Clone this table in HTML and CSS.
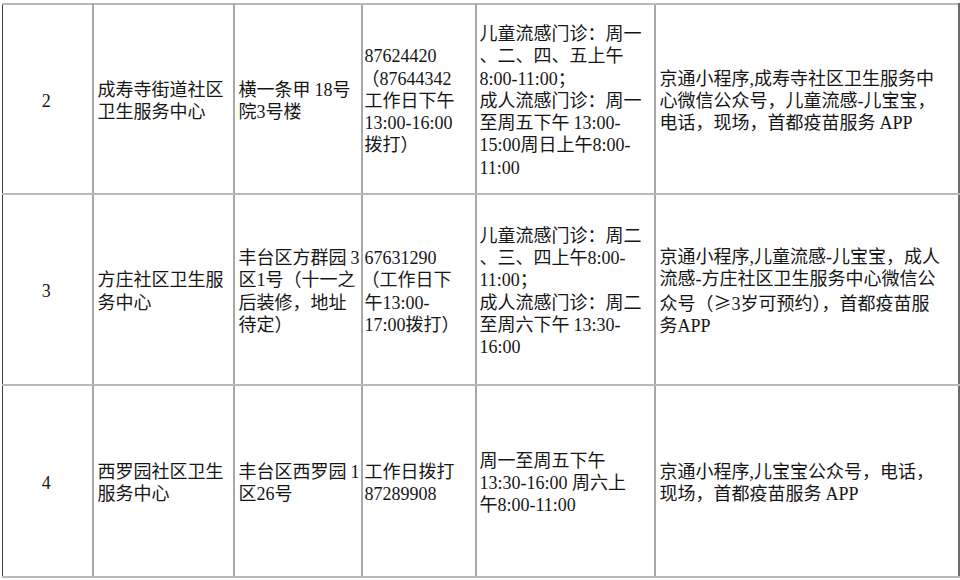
FILE: index.html
```html
<!DOCTYPE html>
<html lang="zh-CN">
<head>
<meta charset="utf-8">
<title>社区卫生服务中心流感疫苗接种信息</title>
<link rel="stylesheet" href="styles.css">
</head>
<body>
<table class="grid">
  <colgroup>
    <col class="w-no">
    <col class="w-name">
    <col class="w-addr">
    <col class="w-tel">
    <col class="w-time">
    <col class="w-way">
  </colgroup>
  <tbody>
    <tr class="row r1">
      <td class="c-no">2</td>
      <td class="c-name">成寿寺街道社区<br>卫生服务中心</td>
      <td class="c-addr">横一条甲<span class="sp"></span>18号<br>院3号楼</td>
      <td class="c-tel">87624420<br><span class="lp">（</span>87644342<br>工作日下午<br>13:00-16:00<br>拨打）</td>
      <td class="c-time">儿童流感门诊：周一<br>、二、四、五上午<br>8:00-11:00；<br>成人流感门诊：周一<br>至周五下午<span class="sp"></span>13:00-<br>15:00周日上午8:00-<br>11:00</td>
      <td class="c-way">京通小程序,成寿寺社区卫生服务中<br>心微信公众号，儿童流感-儿宝宝，<br>电话，现场，首都疫苗服务<span class="sp"></span>APP</td>
    </tr>
    <tr class="row r2">
      <td class="c-no">3</td>
      <td class="c-name">方庄社区卫生服<br>务中心</td>
      <td class="c-addr">丰台区方群园<span class="sp"></span>3<br>区1号（十一之<br>后装修，地址<br>待定）</td>
      <td class="c-tel">67631290<br><span class="lp">（</span>工作日下<br>午13:00-<br>17:00拨打）</td>
      <td class="c-time">儿童流感门诊：周二<br>、三、四上午8:00-<br>11:00；<br>成人流感门诊：周二<br>至周六下午<span class="sp"></span>13:30-<br>16:00</td>
      <td class="c-way">京通小程序,儿童流感-儿宝宝，成人<br>流感-方庄社区卫生服务中心微信公<br>众号（<span class="cjk">≥</span>3岁可预约），首都疫苗服<br>务APP</td>
    </tr>
    <tr class="row r3">
      <td class="c-no">4</td>
      <td class="c-name">西罗园社区卫生<br>服务中心</td>
      <td class="c-addr">丰台区西罗园<span class="sp"></span>1<br>区26号</td>
      <td class="c-tel">工作日拨打<br>87289908</td>
      <td class="c-time">周一至周五下午<br>13:30-16:00 周六上<br>午8:00-11:00</td>
      <td class="c-way">京通小程序,儿宝宝公众号，电话，<br>现场，首都疫苗服务<span class="sp"></span>APP</td>
    </tr>
  </tbody>
</table>
</body>
</html>
```

FILE: styles.css
```css
html, body {
  margin: 0;
  padding: 0;
  background: #ffffff;
}

body {
  width: 960px;
  height: 580px;
  overflow: hidden;
}

.grid {
  margin: 3px 0 0 2px;
  width: 956px;
  table-layout: fixed;
  border-collapse: collapse;
  font-family: "Liberation Serif", "Noto Sans CJK SC", serif;
  font-size: 18px;
  line-height: 22.2px;
  color: #161616;
  white-space: nowrap;
}

.w-no   { width: 90px; }
.w-name { width: 141px; }
.w-addr { width: 128px; }
.w-tel  { width: 114px; }
.w-time { width: 179px; }
.w-way  { width: 304px; }

.row td {
  vertical-align: middle;
  padding: 4px 3px 0 4px;
  border-top: 2px solid #b9b9b9;
  border-bottom: 2px solid #b9b9b9;
  border-left: 2px solid #a8a8a8;
  border-right: 2px solid #a8a8a8;
}

.r1 { height: 190px; }
.r2 { height: 191px; }
.r3 { height: 192px; }

.c-no {
  text-align: center;
  padding-left: 0;
  padding-right: 0;
}

.row td.c-no {
  border-left: 1px solid #3c3c3c;
  padding-left: 1px;
}

.row td.c-addr {
  border-right: 1px solid #555555;
}

.row td.c-tel {
  padding-left: 2px;
  padding-right: 0;
}

.row td.c-time {
  padding-left: 3px;
  border-right: 1px solid #666666;
}

.row td.c-way {
  border-right: 2px solid #6a6a6a;
}

.sp {
  display: inline-block;
  width: 4px;
}

.lp {
  margin-left: -3px;
}

.cjk {
  font-family: "Noto Sans CJK SC", sans-serif;
}
```
